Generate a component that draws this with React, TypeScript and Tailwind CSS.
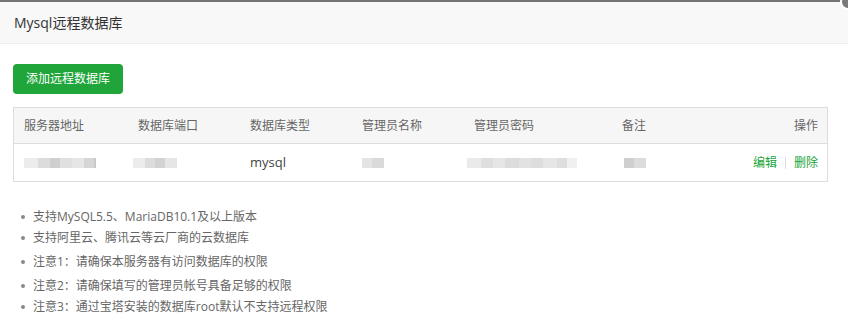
import React from 'react';

const Blur = ({ blocks }: { blocks: { w: number; c: string }[] }) => (
  <div className="flex items-center h-[10px]">
    {blocks.map((b, i) => (
      <span key={i} className="h-[10px] block" style={{ width: b.w, background: b.c }} />
    ))}
  </div>
);

const cols = ['服务器地址', '数据库端口', '数据库类型', '管理员名称', '管理员密码', '备注'];
const widths = ['w-[114px]', 'w-[112px]', 'w-[112px]', 'w-[112px]', 'w-[148px]', 'w-[112px]'];

export default function App() {
  const font = { fontFamily: '"Open Sans", "Noto Sans CJK SC", sans-serif' };
  return (
    <div className="w-[848px] h-[332px] bg-white relative overflow-hidden" style={font}>
      <div className="h-[2px] bg-[#747474]" />
      <div className="absolute right-[-8px] top-[-6px] w-[16px] h-[16px] rounded-full bg-[#7a7a7a] border-2 border-white" />
      <div className="h-[42px] bg-[#f8f8f8] border-b border-[#eeeeee] flex items-center px-[14px] text-[14px] text-[#333]">
        Mysql远程数据库
      </div>
      <div className="px-[13px] pt-[20px]">
        <button className="h-[30px] px-[13px] rounded-[4px] bg-[#20a53a] text-white text-[12px] leading-[30px]">
          添加远程数据库
        </button>
        <div className="mt-[13px] w-[815px] border border-[#dddddd] text-[12px] text-[#666]">
          <div className="h-[36px] bg-[#f6f6f6] border-b border-[#dddddd] flex items-center pl-[10px] pr-[9px]">
            {cols.map((c, i) => (
              <div key={c} className={widths[i]}>{c}</div>
            ))}
            <div className="flex-1 text-right">操作</div>
          </div>
          <div className="h-[37px] flex items-center pl-[10px] pr-[9px]">
            <div className="w-[114px]">
              <Blur blocks={[{ w: 14, c: '#ececec' }, { w: 12, c: '#dcdcdc' }, { w: 10, c: '#cfcfcf' }, { w: 12, c: '#e0e0e0' }, { w: 12, c: '#e6e6e6' }, { w: 10, c: '#d6d6d6' }, { w: 2, c: '#c8c8c8' }]} />
            </div>
            <div className="w-[112px] -ml-[5px]">
              <Blur blocks={[{ w: 12, c: '#ececec' }, { w: 10, c: '#dcdcdc' }, { w: 10, c: '#d2d2d2' }, { w: 12, c: '#e6e6e6' }]} />
            </div>
            <div className="w-[112px] ml-[5px] text-[#444] text-[13px]">mysql</div>
            <div className="w-[112px]">
              <Blur blocks={[{ w: 10, c: '#e4e4e4' }, { w: 12, c: '#dadada' }]} />
            </div>
            <div className="w-[148px] -ml-[7px]">
              <Blur blocks={[{ w: 14, c: '#eaeaea' }, { w: 12, c: '#dedede' }, { w: 12, c: '#e6e6e6' }, { w: 14, c: '#dcdcdc' }, { w: 12, c: '#e2e2e2' }, { w: 12, c: '#dddddd' }, { w: 14, c: '#e6e6e6' }, { w: 10, c: '#dedede' }, { w: 10, c: '#f0f0f0' }]} />
            </div>
            <div className="w-[112px] ml-[9px]">
              <Blur blocks={[{ w: 10, c: '#cfcfcf' }, { w: 12, c: '#dcdcdc' }]} />
            </div>
            <div className="flex-1 flex justify-end items-center text-[#20a53a]">
              <span>编辑</span>
              <span className="mx-[8px] w-px h-[12px] bg-[#dddddd]" />
              <span>删除</span>
            </div>
          </div>
        </div>
        <ul className="mt-[26px] pl-[8px] text-[12px] text-[#666] leading-[18px]">
          {[
            ['支持MySQL5.5、MariaDB10.1及以上版本', 0],
            ['支持阿里云、腾讯云等云厂商的云数据库', 3],
            ['注意1：请确保本服务器有访问数据库的权限', 6],
            ['注意2：请确保填写的管理员帐号具备足够的权限', 6],
            ['注意3：通过宝塔安装的数据库root默认不支持远程权限', 3],
          ].map(([t, m]) => (
            <li key={t as string} className="flex items-center" style={{ marginTop: m as number }}>
              <span className="w-[4px] h-[4px] rounded-full bg-[#888] mr-[8px]" />
              {t}
            </li>
          ))}
        </ul>
      </div>
    </div>
  );
}
